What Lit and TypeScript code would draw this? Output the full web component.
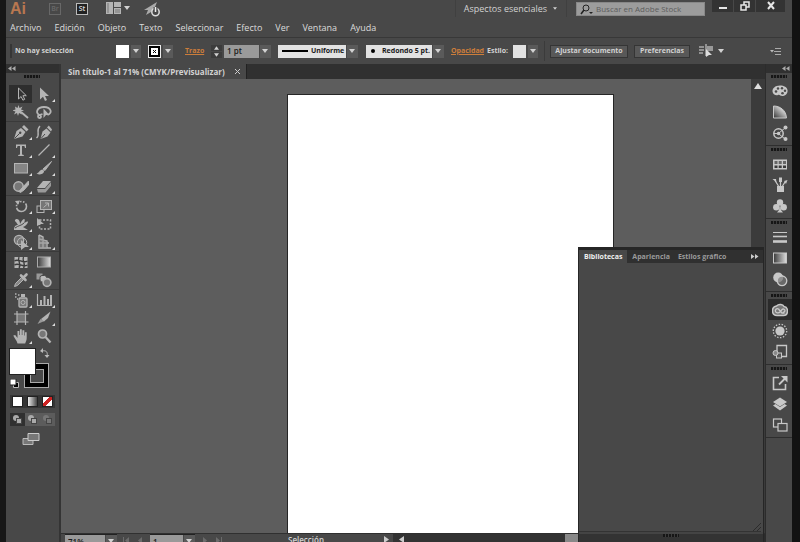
import { LitElement, html, svg, css, SVGTemplateResult } from "lit";
import { customElement, state } from "lit/decorators.js";
import { classMap } from "lit/directives/class-map.js";

type Tool = { id: string; label: string; art: SVGTemplateResult; more?: boolean };

/* Artwork is drawn on a 16 x 16 grid with currentColor. */
const art: Record<string, SVGTemplateResult> = {
  select: svg`<path d="M5.5 2v11l2.6-2.5 1.8 3.7 1.8-.9-1.8-3.6h3.4z" fill="#333" stroke="currentColor"/>`,
  direct: svg`<path d="M4 1.500v12l3-2.800 2 4.300 2-1-2-4h4z" fill="currentColor"/>`,
  wand: svg`<path d="M8 8l7 6" stroke="currentColor" stroke-width="2"/><path d="M5.500 1l1 3 3-1.500L8 5.500l3 1-3 1 1 3-3-1.500-1 3-1-3-3 1.500 1.500-3-3-1 3-1L2 2.500 4.500 4z" fill="currentColor"/>`,
  lasso: svg`<path d="M3.500 11C-1 9 1 3 8 3s9 6 3.500 8M3.500 11c-2 0-2 3 0 3s2-3 0-3l3-1" fill="none" stroke="currentColor" stroke-width="1.800"/><path d="M7.500 4.500l6 6.500H10L7.500 14z" fill="currentColor"/>`,
  pen: svg`<path d="M1 15L3.500 7l4.500-3L12.500 8l-3 4.500z" fill="currentColor"/><path d="M9 3L11 1 15.500 5.500 13.500 7.500z" fill="currentColor"/><path d="M1.500 14.500l5-5" stroke="#484848"/><circle cx="7.200" cy="8.800" r="1.200" fill="#484848"/>`,
  curve: svg`<path d="M4.500 15L6.500 7.500l4-3L14.500 8.500 11.500 12.500z" fill="currentColor"/><path d="M11 3.500L12.800 1.500 16 5.500 15 7.500z" fill="currentColor"/><path d="M5 14.500L9 10" stroke="#484848"/><path d="M.5 14C5 10-1 7 4 2" fill="none" stroke="currentColor" stroke-width="1.400"/>`,
  type: svg`<path d="M3 2.500h10V6h-1l-.6-2H9v8.600l1.800.4v1H5.200v-1L7 12.600V4H4.600L4 6H3z" fill="currentColor"/>`,
  line: svg`<path d="M2.500 13.500l11-11" stroke="currentColor" stroke-width="1.300"/>`,
  rect: svg`<rect x="1.500" y="3.500" width="13" height="9.500" fill="#858585" stroke="currentColor"/>`,
  brush: svg`<path d="M15.500 1.500L9 10.500 7 9z" fill="currentColor" stroke="currentColor"/><path d="M6.500 9.500c2 1 2 2.500.5 3.800S3 15 .5 13.500c2.500-.5 3-3.500 6-4z" fill="currentColor"/>`,
  blob: svg`<circle cx="5.500" cy="8.500" r="4.700" fill="#777" stroke="currentColor" stroke-width="1.500"/><path d="M15.500 3L9 10l-3 3.500 1.500 1L11 12l6-7z" fill="currentColor" stroke="currentColor"/>`,
  eraser: svg`<path d="M1 10l6-7h8l-6 7z" fill="currentColor"/><path d="M1 11h8l6-7v4L9.500 14.500H2z" fill="#999"/>`,
  rotate: svg`<circle cx="8.500" cy="8.500" r="5" fill="none" stroke="currentColor" stroke-width="1.600" stroke-dasharray="14 1.500 1.500 1.500 1.500 1.500 1.500 1.500 1.500 1.500"/><path d="M2 3l5-.5L5 7z" fill="currentColor"/>`,
  scale: svg`<rect x="1" y="8" width="7" height="6.500" fill="none" stroke="currentColor"/><rect x="4.500" y="2.500" width="11" height="9" fill="#777" stroke="currentColor"/><path d="M7.500 9.500l4.500-4M9 5h3.500v3.500" fill="none" stroke="currentColor"/>`,
  warp: svg`<path d="M1 14c0-4 2-5 4-5L3 6C1 5 2 3 4 3s3 3 3 5c1-2 3-5 4-5s1 2 0 4c2-1 4-2 4-1s-2 4-5 5l5 3z" fill="currentColor"/><path d="M2 12c4-3 6-2 9-5" fill="none" stroke="#484848"/>`,
  transform: svg`<rect x="3.500" y="4" width="11" height="9" fill="none" stroke="currentColor" stroke-width="1.500" stroke-dasharray="2 1.500"/><path d="M1 2l7 6H5L1 10z" fill="currentColor"/>`,
  shape: svg`<circle cx="6" cy="6" r="4.700" fill="#777" stroke="currentColor" stroke-width="1.300"/><circle cx="9" cy="8.500" r="4.700" fill="none" stroke="currentColor"/><path d="M8 6l8 7h-4l-4 3z" fill="currentColor"/>`,
  perspective: svg`<path d="M3 1v13h12M3 1l4 2v11M3 5l8 2v7M3 9h10" fill="none" stroke="currentColor" stroke-width="1.400"/><path d="M3 2l4 2 4 4v6H3z" fill="#999" opacity=".6"/>`,
  mesh: svg`<rect x="1.500" y="3" width="13" height="11" fill="#b5b5b5"/><path d="M1.500 7c4-3 8 3 13 0M1.500 11c4-3 8 3 13 0M6 3c-2 4 3 7 0 11M10.500 3c-2 4 3 7 0 11" fill="none" stroke="#3c3c3c" stroke-width="1.300"/>`,
  gradient: svg`<defs><linearGradient id="g"><stop offset="0" stop-color="#3a3a3a"/><stop offset="1" stop-color="#ddd"/></linearGradient></defs><rect x="1.500" y="3" width="13" height="10" fill="url(#g)" stroke="#aaa"/>`,
  dropper: svg`<path d="M1.500 14.500l1-3 6-6 2 2-6 6z" fill="#888" stroke="currentColor"/><path d="M8 3.500l4.500 4.500M10 6l3.500-3.500" stroke="currentColor" stroke-width="2.600" stroke-linecap="round"/>`,
  blend: svg`<rect x=".5" y="1.500" width="6" height="6" fill="#999"/><rect x="4" y="3.500" width="6.500" height="6.500" rx="2" fill="#bbb" stroke="#484848"/><circle cx="11" cy="10.500" r="3.900" fill="#777" stroke="currentColor" stroke-width="1.600"/>`,
  spray: svg`<rect x="6" y="6" width="8" height="9" rx="1" fill="#777" stroke="currentColor" stroke-width="1.300"/><rect x="8" y="2" width="4" height="3" fill="currentColor"/><circle cx="10" cy="10.500" r="2" fill="none" stroke="currentColor"/><path d="M2 2h1.500M5 3h1.500M2 5h1.500M4 7h1" stroke="currentColor" stroke-width="1.300"/>`,
  graph: svg`<path d="M1.500 2v11.500H16" fill="none" stroke="currentColor" stroke-width="1.200"/><path d="M5 13V8M8.500 13V4M12 13V7M15 13V3" stroke="currentColor" stroke-width="2"/>`,
  artboard: svg`<rect x="4" y="4" width="8.500" height="8" fill="#777"/><path d="M4 1v14M12.500 1v14M1 4h14.500M1 12h14.500" stroke="currentColor" stroke-width="1.200"/>`,
  slice: svg`<path d="M1.500 14l3-5 4 2z" fill="#999"/><path d="M5 9L14.500 1.500 12 8 8 11.500z" fill="currentColor"/>`,
  hand: svg`<path d="M4.500 15.500C4 12 1 10 .3 7.500l1.900-.4L4.500 10V3h1.800v4h.6V1.200h1.900V7h.6V2.200h1.900v5.300h.6V4.300h1.800V10c0 2.500-1 3.500-1.500 5.500z" fill="currentColor"/>`,
  zoom: svg`<circle cx="6.500" cy="6" r="4" fill="#777" stroke="currentColor" stroke-width="1.700"/><path d="M9.500 9l5 5.500" stroke="currentColor" stroke-width="2.300"/>`,
  palette: svg`<path d="M8 2.500C3 2.500.3 5.500.5 8.500S4 13 6 12s2 1.500 5 1 5-3 4.500-6S12 2.500 8 2.500z" fill="currentColor"/><g fill="#4a4a4a"><circle cx="4" cy="8.500" r="1.300"/><circle cx="6" cy="5.500" r="1.200"/><circle cx="10" cy="5.300" r="1.200"/><circle cx="13" cy="7.700" r="1.200"/><circle cx="10.500" cy="10.300" r="1.300"/></g>`,
  guide: svg`<defs><linearGradient id="q" x1="1" y1="0" x2="0" y2="1"><stop offset="0.200" stop-color="#e8e8e8"/><stop offset="1" stop-color="#333"/></linearGradient></defs><path d="M1.500 2v12h13C14 6 8 2 1.500 2z" fill="url(#q)" stroke="currentColor"/>`,
  themes: svg`<circle cx="6.500" cy="8.500" r="4.700" fill="none" stroke="currentColor" stroke-width="1.500"/><circle cx="6.500" cy="8.500" r="1.700" fill="currentColor"/><path d="M7 8l6-5M7 9l6 5M6.500 8.500H2" stroke="currentColor"/><circle cx="13.500" cy="2.500" r="2" fill="currentColor"/><circle cx="13.500" cy="14" r="2" fill="currentColor"/>`,
  swatches: svg`<rect x="1" y="3.500" width="14" height="10" fill="currentColor"/><path d="M2.500 5h3v3h-3zM6.700 5h3v3h-3zM11 5h3v3h-3z" fill="#666"/><path d="M2.500 9.500h3v2.500h-3zM6.700 9.500h3v2.500h-3zM11 9.500h3v2.500h-3z" fill="#3a3a3a"/>`,
  brushes: svg`<path d="M5 9h7v6H5z" fill="currentColor"/><path d="M6.500 9L3 3.500M8.500 9V3M10.500 9L13 5" stroke="currentColor" stroke-width="1.300"/><path d="M.5 2l3.500 0 .5 3.500zM7 .5h3V5H7zM12 4l3.500-1-1.500 4z" fill="currentColor"/>`,
  symbols: svg`<circle cx="8" cy="4.500" r="3.200" fill="currentColor"/><circle cx="4.300" cy="9.300" r="3.200" fill="currentColor"/><circle cx="11.700" cy="9.300" r="3.200" fill="currentColor"/><path d="M8 6l1 6 2 2.500H5L7 12z" fill="currentColor"/>`,
  stroke: svg`<path d="M1 3.500h14" stroke="currentColor"/><path d="M1 7.500h14" stroke="currentColor" stroke-width="1.600"/><path d="M1 12.500h14" stroke="currentColor" stroke-width="2.600"/>`,
  gradientPanel: svg`<defs><linearGradient id="p"><stop offset="0" stop-color="#3a3a3a"/><stop offset="1" stop-color="#ddd"/></linearGradient></defs><rect x="1.500" y="3" width="13" height="10" fill="url(#p)" stroke="currentColor"/>`,
  transparency: svg`<circle cx="6.200" cy="6.500" r="5" fill="currentColor"/><circle cx="10" cy="9.800" r="4.800" fill="#777" fill-opacity=".7" stroke="currentColor" stroke-width="1.300"/>`,
  cloud: svg`<path d="M5.500 13.500C-1 14-1 5 4.500 4 7 1.500 11 2.500 12 4.500c5 1 4.500 9-.5 9z" fill="#777" stroke="currentColor" stroke-width="1.500"/><path d="M12.500 11H10L6.500 7C4.500 6 2.800 8 3.500 9.500s3 2 4.500.5 2-4 4-2.800.5 3.500-1 2.800" fill="none" stroke="currentColor" stroke-width="1.300"/>`,
  appearance: svg`<circle cx="8" cy="8" r="4.600" fill="currentColor"/><circle cx="8" cy="8" r="6.700" fill="none" stroke="currentColor" stroke-width="1.300" stroke-dasharray="1.500 1.500"/>`,
  styles: svg`<path d="M5 7V1.500h9.500v11H9" fill="none" stroke="currentColor" stroke-width="1.300"/><rect x="4.500" y="9" width="5" height="5" fill="#555" stroke="currentColor"/><circle cx="3.500" cy="9" r="2.500" fill="#888" stroke="currentColor"/>`,
  share: svg`<path d="M7 2.500H1.500v12h12V9" fill="none" stroke="currentColor" stroke-width="1.600"/><path d="M7 9.500L13 3.500" stroke="currentColor" stroke-width="1.800"/><path d="M9 1h6.500v6.500z" fill="currentColor"/>`,
  layers: svg`<path d="M8 1.500L15 6 8 10.500 1 6z" fill="currentColor"/><path d="M1 9.500l2.500-1.500L8 11l4.500-3L15 9.500 8 14.500z" fill="currentColor"/>`,
  artboards: svg`<rect x="1.500" y="2" width="8" height="8" fill="none" stroke="currentColor" stroke-width="1.200"/><rect x="6" y="6.500" width="9" height="7.500" fill="#484848" stroke="currentColor" stroke-width="1.200"/>`,
};

const toolGroups: Tool[][] = [
  [
    { id: "select", label: "Selección", art: art.select },
    { id: "direct", label: "Selección directa", art: art.direct, more: true },
    { id: "wand", label: "Varita mágica", art: art.wand },
    { id: "lasso", label: "Lazo", art: art.lasso },
  ],
  [
    { id: "pen", label: "Pluma", art: art.pen, more: true },
    { id: "curve", label: "Curvatura", art: art.curve },
    { id: "type", label: "Texto", art: art.type, more: true },
    { id: "line", label: "Segmento de línea", art: art.line, more: true },
    { id: "rect", label: "Rectángulo", art: art.rect, more: true },
    { id: "brush", label: "Pincel", art: art.brush, more: true },
    { id: "blob", label: "Lápiz", art: art.blob, more: true },
    { id: "eraser", label: "Borrador", art: art.eraser, more: true },
  ],
  [
    { id: "rotate", label: "Rotar", art: art.rotate, more: true },
    { id: "scale", label: "Escala", art: art.scale, more: true },
    { id: "warp", label: "Anchura", art: art.warp, more: true },
    { id: "transform", label: "Transformación libre", art: art.transform },
    { id: "shape", label: "Creador de formas", art: art.shape, more: true },
    { id: "perspective", label: "Cuadrícula de perspectiva", art: art.perspective, more: true },
  ],
  [
    { id: "mesh", label: "Malla", art: art.mesh },
    { id: "gradient", label: "Degradado", art: art.gradient },
    { id: "dropper", label: "Cuentagotas", art: art.dropper, more: true },
    { id: "blend", label: "Fusión", art: art.blend },
  ],
  [
    { id: "spray", label: "Rociar símbolos", art: art.spray, more: true },
    { id: "graph", label: "Gráfica", art: art.graph, more: true },
    { id: "artboard", label: "Mesa de trabajo", art: art.artboard },
    { id: "slice", label: "Sector", art: art.slice, more: true },
    { id: "hand", label: "Mano", art: art.hand, more: true },
    { id: "zoom", label: "Zoom", art: art.zoom },
  ],
];

const dockGroups: [string, SVGTemplateResult][][] = [
  [["Color", art.palette], ["Guía de color", art.guide], ["Temas", art.themes]],
  [["Muestras", art.swatches], ["Pinceles", art.brushes], ["Símbolos", art.symbols]],
  [["Trazo", art.stroke], ["Degradado", art.gradientPanel], ["Transparencia", art.transparency]],
  [["Bibliotecas", art.cloud], ["Apariencia", art.appearance], ["Estilos gráficos", art.styles]],
  [["Exportar", art.share], ["Capas", art.layers], ["Mesas de trabajo", art.artboards]],
];

const menus = ["Archivo", "Edición", "Objeto", "Texto", "Seleccionar", "Efecto", "Ver", "Ventana", "Ayuda"];

const icon = (a: SVGTemplateResult, box = "0 0 16 16") =>
  html`<svg class="icon" viewBox=${box} aria-hidden="true">${a}</svg>`;
const caret = html`<svg class="caret" viewBox="0 0 6 4" aria-hidden="true"><path d="M0 0h6L3 4z" /></svg>`;
const chevrons = (left: boolean) =>
  html`<svg class="chevrons" viewBox="0 0 8 5" aria-hidden="true">
    <path d=${left ? "M3.500 0v5L0 2.500zM7.500 0v5L4 2.500z" : "M0 0v5l3.500-2.500zM4 0v5l3.500-2.500z"} />
  </svg>`;

@customElement("app-root")
export class AppRoot extends LitElement {
  @state() private tool = "select";

  static styles = css`
    :host {
      display: block;
      font: 600 7px/12px "Open Sans", "Noto Sans", sans-serif;
      color: #d2d2d2;
    }
    * { box-sizing: border-box; }
    button, input, select {
      font: inherit;
      color: inherit;
      margin: 0;
      padding: 0;
      border: 0;
      border-radius: 0;
      background: none;
      appearance: none;
      outline: none;
    }
    button { display: flex; align-items: center; justify-content: center; }
    svg { display: block; flex: none; fill: currentColor; }
    .icon { width: 16px; height: 16px; color: #b4b4b4; fill: none; }
    .caret { width: 6px; height: 4px; }
    .chevrons { width: 8px; height: 5px; }

    .window {
      height: 100vh;
      display: flex;
      flex-direction: column;
      overflow: hidden;
      background: #484848;
      border-left: 6px solid #171717;
      border-right: 8px solid #121212;
    }

    .title { display: flex; align-items: flex-start; height: 18px; flex: none; }
    .logo { width: 39px; padding-left: 4px; font: 700 16px/18px "Liberation Sans", Arial, sans-serif; color: #b87750; }
    .badge { width: 12px; height: 12px; margin: 3px 15px 0 4px; border: 1px solid #686868; color: #686868; font-size: 7px; line-height: 10px; }
    .badge.lit { border-color: #bbb; background: #222; color: #ddd; margin: 3px 18px 0 0; }
    .layout { gap: 3px; margin: 2px 14px 0 0; height: 12px; }
    .layout .blocks { width: 15px; height: 12px; }
    .gpu { width: 17px; height: 16px; margin-top: 1px; color: #aaa; }
    .workspace { margin-left: auto; height: 17px; padding: 0 9px 0 8px; gap: 6px; border: 1px solid #404040; border-width: 0 1px; font-size: 9px; font-weight: 400; }
    .workspace .caret { width: 4px; height: 3px; }
    .search { display: flex; align-items: center; width: 129px; height: 14px; margin: 2px 7px 0 9px; padding: 0 3px; gap: 3px; background: #9c9c9c; border: 1px solid #888; color: #222; }
    .search svg { width: 13px; height: 11px; }
    .search input { flex: 1; min-width: 0; height: 12px; font-size: 8px; font-weight: 400; }
    .search input::placeholder { color: #5c5c5c; opacity: 1; }
    .controls { display: flex; margin-right: 7px; height: 12px; background: #333; color: #e6e6e6; }
    .controls button { width: 22px; height: 12px; border-right: 1px solid #484848; }
    .controls .close { width: 29px; border: 0; }
    .controls svg { width: 10px; height: 10px; }

    .menu { display: flex; flex: none; height: 19px; padding: 0 4px; gap: 13px; font-size: 9px; font-weight: 400; color: #dcdcdc; }

    .control { display: flex; align-items: center; flex: none; height: 27px; border-top: 1px solid #383838; padding: 0 11px 0 4px; white-space: nowrap; font-weight: 700; }
    .handle { width: 2px; height: 14px; background: #363636; margin-right: 3px; }
    .nosel { width: 101px; }
    .swatch { width: 13px; height: 13px; background: #fff; }
    .swatch.line { display: grid; place-items: center; background: #000; border: 1px solid #eee; color: #fff; }
    .drop { width: 10px; height: 13px; margin-left: 2px; background: #5a5a5a; }
    .drop + .swatch { margin-left: 7px; }
    a { color: #cc7d3b; }
    .trazo { width: 19px; margin: 0 7px 0 12px; }
    .spin { display: grid; gap: 1px; width: 11px; margin-right: 2px; }
    .spin button { height: 6px; background: #3c3c3c; }
    .spin .caret { width: 5px; height: 4px; }
    .spin .up { transform: rotate(180deg); }
    .combo { display: grid; grid-template-columns: 1fr 12px; align-items: center; height: 13px; }
    .combo select { grid-area: 1 / 1 / 2 / 3; width: 100%; height: 13px; color: #1a1a1a; background: linear-gradient(to left, #5a5a5a 11px, #484848 11px 12px, var(--face, #e2e2e2) 12px); }
    .combo .caret { grid-area: 1 / 2; justify-self: center; pointer-events: none; z-index: 1; }
    .combo .sample { grid-area: 1 / 1; width: 32px; height: 8px; color: #000; pointer-events: none; z-index: 1; margin-left: 2px; }
    .weight { --face: #9a9a9a; width: 47px; margin-right: 7px; }
    .weight select { padding-left: 3px; font-size: 8px; font-weight: 600; }
    .profile { width: 80px; margin-right: 8px; }
    .profile select { padding-left: 33px; }
    .tip { width: 78px; margin-right: 7px; }
    .tip select { padding-left: 16px; }
    .opacity { width: 36px; }
    .style { width: 26px; }
    .swatch.grey { background: #e2e2e2; }
    .rule { width: 1px; height: 20px; background: #3b3b3b; margin: 0 5px 0 6px; }
    .btn { height: 13px; padding: 0 4px; background: #585858; border: 1px solid #353535; margin-right: 6px; }
    .btn.fit { width: 78px; }
    .btn.prefs { width: 56px; margin-right: 8px; }
    .align { gap: 4px; }
    .flyout { margin-left: auto; }
    .flyout svg { width: 11px; height: 9px; }

    .body { display: flex; flex: 1; min-height: 0; }
    .tools { flex: none; width: 55px; border-right: 2px solid #343434; }
    .head { display: flex; align-items: center; height: 9px; width: 100%; background: #303030; color: #aaa; padding: 0 2px; justify-content: flex-start; }
    .grip { height: 3px; width: 16px; margin: 2px auto; background: repeating-linear-gradient(to right, #161616 0 2px, #3c3c3c 2px 3px); }
    .tools .grip { margin: 2px auto 7px 18px; }
    .group { display: grid; grid-template-columns: 23px 23px; grid-auto-rows: 18px; padding: 0 3px; }
    .group + .group { border-top: 1px solid #3a3a3a; padding-top: 1px; }
    .tool { position: relative; }
    .tool.on { background: #2e2e2e; }
    .more::after { content: ""; position: absolute; right: 0; bottom: 1px; border: solid #ddd; border-width: 0 0 3px 0; border-left: 3px solid transparent; }
    .paint { display: grid; grid-template-columns: 15px 12px 13px; grid-template-rows: 15px 12px 13px; margin: 3px 0 0 3px; }
    .fill { grid-area: 1 / 1 / 3 / 3; background: #fff; border: 1px solid #222; z-index: 1; }
    .outline { grid-area: 2 / 2 / 4 / 4; background: #000; border: 1px solid #aaa; display: grid; place-items: center; }
    .outline i { width: 14px; height: 14px; background: #484848; border: 1px solid #aaa; }
    .swap { grid-area: 1 / 3; width: 10px; height: 10px; margin-left: 4px; }
    .reset { grid-area: 3 / 1; width: 9px; height: 9px; margin: 4px 0 0 1px; }
    .modes { display: grid; grid-template-columns: repeat(3, 15px); width: 45px; margin: 7px 0 5px 4px; height: 13px; background: #353535; }
    .modes i { width: 11px; height: 11px; border: 1px solid #222; }
    .solid { background: #fff; }
    .fade { background: linear-gradient(to right, #eee, #444); }
    .none { background: linear-gradient(to bottom left, transparent 0 0), linear-gradient(to bottom right, #fff 38%, #c22 38% 62%, #fff 62%); }
    .modes.draw { background: #5c5c5c; margin: 5px 0 6px 4px; }
    .draw button:first-child { background: #303030; }
    .draw svg { width: 11px; height: 11px; color: #aaa; }
    .draw .dim { color: #777; }
    .screen { margin-left: 16px; }
    .screen svg { width: 18px; height: 14px; color: #bbb; }

    .stage { position: relative; flex: 1; min-width: 0; display: flex; flex-direction: column; }
    .tabs { display: flex; flex: none; height: 15px; background: #303030; }
    .doc { display: flex; align-items: center; gap: 10px; padding: 0 6px 0 7px; background: #484848; border-right: 1px solid #222; font-size: 8px; font-weight: 700; white-space: nowrap; }
    .doc svg { width: 5px; height: 5px; stroke: #ccc; }
    .view { display: flex; flex: 1; min-height: 0; }
    .canvas { flex: 1; min-width: 0; background: #5d5d5d; overflow: hidden; }
    .artboard { width: 327px; height: 100%; margin: 15px 0 0 226px; background: #fff; border: 1px solid #262626; }
    .vscroll { width: 14px; background: #3b3b3b; color: #ddd; padding-top: 4px; }
    .vscroll svg { width: 8px; height: 6px; margin: 0 auto; }
    .status { display: flex; align-items: flex-start; flex: none; height: 9px; overflow: hidden; background: #484848; border-top: 1px solid #303030; font-size: 8px; }
    .field { --face: #999; height: 14px; margin-left: 4px; }
    .field select { padding-left: 3px; height: 14px; border-top: 1px solid #222; }
    .zoomlevel { width: 52px; }
    .page { width: 45px; }
    .nav { display: flex; gap: 7px; width: 29px; padding: 3px 0 0 6px; color: #6b6b6b; }
    .nav svg { width: 7px; height: 7px; }
    .current { width: 96px; margin-left: 64px; }
    .arrow { width: 5px; height: 7px; margin-top: 2px; color: #ccc; }
    .hscroll { display: flex; justify-content: space-between; width: 185px; height: 9px; margin-left: 4px; padding-left: 6px; background: #333; }
    .thumb { width: 13px; height: 9px; background: #888; }
    .rest { flex: 1; align-self: stretch; background: #2c2c2c; }

    .panel { position: absolute; right: 1px; bottom: 0; width: 186px; height: 295px; display: flex; flex-direction: column; background: #484848; border: 1px solid #262626; border-width: 3px 1px 0; }
    .panel .list { display: flex; align-items: center; flex: none; height: 13px; background: #303030; padding-right: 4px; color: #9a9a9a; font-weight: 700; }
    .list button { height: 13px; padding: 0 4px; }
    .list .chosen { background: #484848; color: #eee; padding: 0 5px; margin-right: 1px; }
    .list .chevrons { margin-left: auto; color: #ccc; }
    .content { flex: 1; border-bottom: 1px solid #333; margin-right: 2px; display: flex; align-items: flex-end; justify-content: flex-end; }
    .content svg { width: 8px; height: 8px; stroke: #2c2c2c; }
    .foot { height: 10px; background: #333; border-top: 2px solid #444; }
    .foot .grip { margin: 0 auto; }

    .dock { flex: none; width: 27px; border-left: 1px solid #2c2c2c; }
    .dock .head { justify-content: flex-end; }
    .stack { display: flow-root; height: 73px; border-bottom: 1px solid #2e2e2e; }
    .stack button { width: 24px; height: 21px; margin-left: 2px; }
    .stack .icon { color: #c8c8c8; }
    .stack .open { background: #2b2b2b; }
  `;

  private combo(cls: string, label: string, value: string, sample: unknown = "") {
    return html`<div class="combo ${cls}">
      <select aria-label=${label}><option>${value}</option></select>${sample}${caret}
    </div>`;
  }

  render() {
    return html`<div class="window">
      <header class="title">
        <div class="logo">Ai</div>
        <button class="badge">Br</button>
        <button class="badge lit">St</button>
        <button class="layout" aria-label="Organizar documentos">
          <svg class="blocks" viewBox="0 0 15 12"><path d="M0 0h7v12H0zM8 0h7v5H8zM8 6h7v6H8z" fill="#b4b4b4" /><path d="M2 1v10M9 8h5M9 10h5" stroke="#777" /></svg>${caret}
        </button>
        <button class="gpu" aria-label="Rendimiento de GPU">
          <svg width="17" height="15" viewBox="0 0 17 15"><path d="M0 8L13 0 11 5 7 10 2 13 4 8z" /><circle cx="11.500" cy="10" r="3.700" fill="#484848" stroke="#ddd" stroke-width="1.500" /><path d="M11.500 5v5" stroke="#484848" stroke-width="4" /><path d="M11.500 5v5" stroke="#eee" stroke-width="1.500" /></svg>
        </button>
        <button class="workspace">Aspectos esenciales ${caret}</button>
        <label class="search">
          <svg viewBox="0 0 13 11"><circle cx="6" cy="4" r="3" fill="none" stroke="#222" /><path d="M4 6L1 10" stroke="#222" stroke-width="1.500" /><path d="M9 8h4l-2 2z" /></svg>
          <input aria-label="Buscar" placeholder="Buscar en Adobe Stock" />
        </label>
        <div class="controls">
          <button aria-label="Minimizar"><svg viewBox="0 0 10 10"><path d="M1 6h8v2H1z" /></svg></button>
          <button aria-label="Restaurar"><svg viewBox="0 0 10 10"><path d="M4 4V1h5v5H6M1 4h5v5H1z" fill="none" stroke="currentColor" stroke-width="1.500" /></svg></button>
          <button class="close" aria-label="Cerrar"><svg viewBox="0 0 10 10"><path d="M2 1l6 7M8 1L2 8" stroke="currentColor" stroke-width="2" /></svg></button>
        </div>
      </header>
      <nav class="menu">${menus.map((m) => html`<button>${m}</button>`)}</nav>

      <div class="control">
        <div class="handle"></div>
        <div class="nosel">No hay selección</div>
        <div class="swatch"></div><button class="drop" aria-label="Relleno">${caret}</button>
        <div class="swatch line"><svg width="7" height="7" viewBox="0 0 7 7"><path d="M0 0h7v7H0z" /><path d="M2 2l3 3M5 2L2 5" stroke="#000" /></svg></div>
        <button class="drop" aria-label="Color de trazo">${caret}</button>
        <a class="trazo" href="#trazo">Trazo</a>
        <div class="spin"><button class="up" aria-label="Más">${caret}</button><button aria-label="Menos">${caret}</button></div>
        ${this.combo("weight", "Grosor", "1 pt")}
        ${this.combo("profile", "Perfil", "Uniforme", html`<svg class="sample" viewBox="0 0 32 8"><path d="M2 3h26v2H2z" /></svg>`)}
        ${this.combo("tip", "Pincel", "Redondo 5 pt.", html`<svg class="sample" viewBox="0 0 32 8"><circle cx="5" cy="4" r="2" /></svg>`)}
        <a class="opacity" href="#opacidad">Opacidad</a>
        <span class="style">Estilo:</span>
        <div class="swatch grey"></div><button class="drop" aria-label="Estilo">${caret}</button>
        <div class="rule"></div>
        <button class="btn fit">Ajustar documento</button>
        <button class="btn prefs">Preferencias</button>
        <button class="align" aria-label="Alinear">
          ${icon(svg`<path d="M1 4h5M1 7h5M1 10h4M8 1v12" stroke="#aaa" stroke-width="1.500"/><path d="M9 3h6v5H9z" fill="#999"/><path d="M8 6l6 6h-3l-3 2z" fill="#ddd"/>`)}${caret}
        </button>
        <button class="flyout" aria-label="Menú">
          <svg viewBox="0 0 11 9"><path d="M0 3h4L2 5.500z" fill="#bbb" /><path d="M5 1.500h6M4 4.500h7M5 7.500h6" stroke="#aaa" /></svg>
        </button>
      </div>

      <div class="body">
        <aside class="tools">
          <button class="head" aria-label="Contraer">${chevrons(true)}</button>
          <div class="grip"></div>
          ${toolGroups.map(
            (g) => html`<div class="group">
              ${g.map(
                (t) => html`<button
                  class=${classMap({ tool: true, on: this.tool === t.id, more: !!t.more })}
                  aria-label=${t.label}
                  @click=${() => (this.tool = t.id)}
                >${icon(t.art)}</button>`,
              )}
            </div>`,
          )}
          <div class="paint">
            <div class="fill"></div>
            <div class="outline"><i></i></div>
            <svg class="swap" viewBox="0 0 10 10"><path d="M2 3c4-1 6 1 5 5" fill="none" stroke="#bbb" /><path d="M0 3l3-3v5zM4.500 7h5L7 10z" fill="#bbb" /></svg>
            <svg class="reset" viewBox="0 0 9 9"><path d="M3.500 3.500h5v5h-5z" fill="#000" stroke="#bbb" /><path d="M0 0h6v6H0z" fill="#fff" stroke="#222" /></svg>
          </div>
          <div class="modes">
            <button aria-label="Color"><i class="solid"></i></button>
            <button aria-label="Degradado"><i class="fade"></i></button>
            <button aria-label="Ninguno"><i class="none"></i></button>
          </div>
          <div class="modes draw">
            ${["", "", "dim"].map(
              (c) => html`<button aria-label="Modo de dibujo"><svg class=${c} viewBox="0 0 11 11"><circle cx="4" cy="4" r="3" /><rect x="4.500" y="4.500" width="5" height="5" stroke="#444" /></svg></button>`,
            )}
          </div>
          <button class="screen" aria-label="Modo de pantalla">
            <svg viewBox="0 0 18 14"><path d="M1 6.500h10v6H1z" fill="#777" stroke="#bbb" /><path d="M6 1.500h11v7H6z" fill="#777" stroke="#ccc" /></svg>
          </button>
        </aside>

        <main class="stage">
          <div class="tabs">
            <div class="doc">Sin título-1 al 71% (CMYK/Previsualizar)
              <button aria-label="Cerrar documento"><svg viewBox="0 0 5 5"><path d="M0 0l5 5M5 0L0 5" /></svg></button>
            </div>
          </div>
          <div class="view">
            <div class="canvas"><div class="artboard"></div></div>
            <div class="vscroll"><svg viewBox="0 0 8 6"><path d="M4 0l4 6H0z" /></svg></div>
          </div>
          <footer class="status">
            ${this.combo("field zoomlevel", "Zoom", "71%")}
            <div class="nav"><svg viewBox="0 0 7 7"><path d="M0 0h1v7H0zM6 0v7L2 3.500z" /></svg><svg viewBox="0 0 7 7"><path d="M5 0v7L1 3.500z" /></svg></div>
            ${this.combo("field page", "Mesa de trabajo", "1")}
            <div class="nav"><svg viewBox="0 0 7 7"><path d="M2 0v7l4-3.500z" /></svg><svg viewBox="0 0 7 7"><path d="M6 0h1v7H6zM1 0v7l4-3.500z" /></svg></div>
            <div class="current">Selección</div>
            <svg class="arrow" viewBox="0 0 5 7"><path d="M0 0v7l5-3.500z" /></svg>
            <div class="hscroll"><svg class="arrow" viewBox="0 0 5 7"><path d="M5 0v7L0 3.500z" /></svg><div class="thumb"></div></div>
            <div class="rest"></div>
          </footer>

          <section class="panel">
            <div class="list">
              <button class="chosen">Bibliotecas</button>
              <button>Apariencia</button>
              <button>Estilos gráfico</button>
              ${chevrons(false)}
            </div>
            <div class="content"><svg viewBox="0 0 8 8"><path d="M0 8l8-8M4 8l4-4" /></svg></div>
            <div class="foot"><div class="grip"></div></div>
          </section>
        </main>

        <aside class="dock">
          <button class="head" aria-label="Expandir">${chevrons(true)}</button>
          ${dockGroups.map(
            (g) => html`<div class="stack">
              <div class="grip"></div>
              ${g.map(([label, a]) => html`<button class=${classMap({ open: label === "Bibliotecas" })} aria-label=${label}>${icon(a)}</button>`)}
            </div>`,
          )}
        </aside>
      </div>
    </div>`;
  }
}
